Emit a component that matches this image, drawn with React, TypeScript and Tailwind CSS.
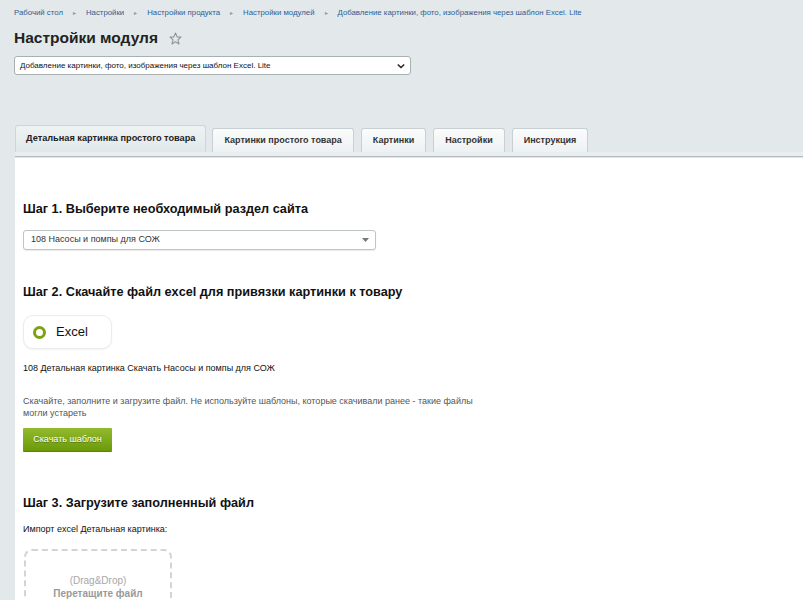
import React from "react";

const crumbs = [
  "Рабочий стол",
  "Настройки",
  "Настройки продукта",
  "Настройки модулей",
  "Добавление картинки, фото, изображения через шаблон Excel. Lite",
];

const tabs = [
  "Детальная картинка простого товара",
  "Картинки простого товара",
  "Картинки",
  "Настройки",
  "Инструкция",
];

const App: React.FC = () => {
  return (
    <div className="min-h-screen bg-[#e3e9eb] font-['Liberation_Sans',Arial,sans-serif] text-[#000]">
      {/* header */}
      <div className="px-[14px] pt-[7px]">
        <div className="flex items-center text-[7.8px] leading-[12px] text-[#2b5d94]">
          {crumbs.map((c, i) => (
            <React.Fragment key={c}>
              {i > 0 && (
                <span className="mx-[10px] text-[6px] text-[#8a9499]">▸</span>
              )}
              <span>{c}</span>
            </React.Fragment>
          ))}
        </div>
        <div className="mt-[9px] flex items-center">
          <h1 className="text-[15.5px] font-bold leading-[20px] text-[#222]">
            Настройки модуля
          </h1>
          <svg
            width="13"
            height="13"
            viewBox="0 0 24 24"
            className="ml-[11px]"
            fill="none"
            stroke="#8c9499"
            strokeWidth="2"
            strokeLinejoin="round"
          >
            <polygon points="12,2 15,9 22,9.5 16.5,14.5 18.5,22 12,18 5.5,22 7.5,14.5 2,9.5 9,9" />
          </svg>
        </div>
        <div className="mt-[8px] flex h-[19px] w-[397px] items-center justify-between rounded-[3px] border border-[#a9b0b4] bg-white pl-[5px] pr-[5px] text-[8px] text-[#111]">
          <span>Добавление картинки, фото, изображения через шаблон Excel. Lite</span>
          <svg width="8" height="6" viewBox="0 0 10 6">
            <path d="M1 1l4 4 4-4" stroke="#222" strokeWidth="1.8" fill="none" />
          </svg>
        </div>
      </div>

      {/* tabs */}
      <div className="mt-[50px] flex items-end pl-[15px]">
        {tabs.map((t, i) =>
          i === 0 ? (
            <div
              key={t}
              className="mr-[6px] flex h-[27px] items-center rounded-t-[3px] border border-b-0 border-[#cfd6d9] bg-gradient-to-b from-[#eef2f3] to-[#e2e8ea] px-[10px] text-[9.2px] font-bold text-[#222]"
            >
              {t}
            </div>
          ) : (
            <div
              key={t}
              className="mr-[7px] flex h-[24px] items-center rounded-t-[3px] border border-b-0 border-[#c9d0d3] bg-gradient-to-b from-[#fbfcfc] to-[#eef1f2] px-[11px] text-[9px] font-bold text-[#333]"
            >
              {t}
            </div>
          )
        )}
      </div>
      <div className="ml-[15px] h-[4px] bg-[#e8eef0]" />
      <div className="ml-[15px] h-[1px] bg-[#b6bcbf]" />
      <div className="ml-[15px] h-[1px] bg-[#dfe3e5]" />

      {/* panel */}
      <div className="ml-[15px] bg-white pb-[40px] pl-[8px] pt-[43px]">
        <h2 className="text-[12.7px] font-bold leading-[16px] text-[#111]">
          Шаг 1. Выберите необходимый раздел сайта
        </h2>
        <div className="mt-[13px] flex h-[20px] w-[353px] items-center justify-between rounded-[3px] border border-[#bfc4c7] bg-white pl-[7px] pr-[6px] text-[9px] text-[#333] shadow-[0_1px_1px_rgba(0,0,0,0.08)]">
          <span>108 Насосы и помпы для СОЖ</span>
          <svg width="7" height="4" viewBox="0 0 7 4">
            <path d="M0 0h7L3.5 4z" fill="#777" />
          </svg>
        </div>

        <h2 className="mt-[34px] text-[12.7px] font-bold leading-[16px] text-[#111]">
          Шаг 2. Скачайте файл excel для привязки картинки к товару
        </h2>
        <div className="mt-[15px] flex h-[34px] w-[89px] items-center rounded-[10px] border border-[#ececec] bg-white pl-[9px] shadow-[0_1px_2px_rgba(0,0,0,0.06)]">
          <span className="h-[13px] w-[13px] rounded-full border-[3px] border-[#7ba30f] bg-white" />
          <span className="ml-[10px] text-[13px] text-[#111]">Excel</span>
        </div>
        <p className="mt-[13px] text-[9px] leading-[12px] text-[#111]">
          108 Детальная картинка Скачать Насосы и помпы для СОЖ
        </p>
        <p className="mt-[21px] w-[468px] text-[9px] leading-[12px] text-[#555]">
          Скачайте, заполните и загрузите файл. Не используйте шаблоны, которые скачивали ранее - такие файлы могли устареть
        </p>
        <button className="mt-[9px] flex h-[24px] w-[89px] items-center justify-center rounded-[1px] border-b border-[#5d8400] bg-gradient-to-b from-[#93ba2c] to-[#6b9a06] text-[9px] text-white [text-shadow:0_1px_0_rgba(0,0,0,0.3)]">
          Скачать шаблон
        </button>

        <h2 className="mt-[43px] text-[12.7px] font-bold leading-[16px] text-[#111]">
          Шаг 3. Загрузите заполненный файл
        </h2>
        <p className="mt-[12px] text-[9px] leading-[12px] text-[#111]">
          Импорт excel Детальная картинка:
        </p>
        <div className="ml-[1px] mt-[14px] flex h-[90px] w-[148px] flex-col items-center justify-start rounded-[8px] border-2 border-dashed border-[#d4d4d4] pt-[23px] text-[10px] leading-[13px] text-[#a8a8a8]">
          <span>(Drag&amp;Drop)</span>
          <span className="font-bold text-[#9a9a9a]">Перетащите файл</span>
        </div>
      </div>
    </div>
  );
};

export default App;
